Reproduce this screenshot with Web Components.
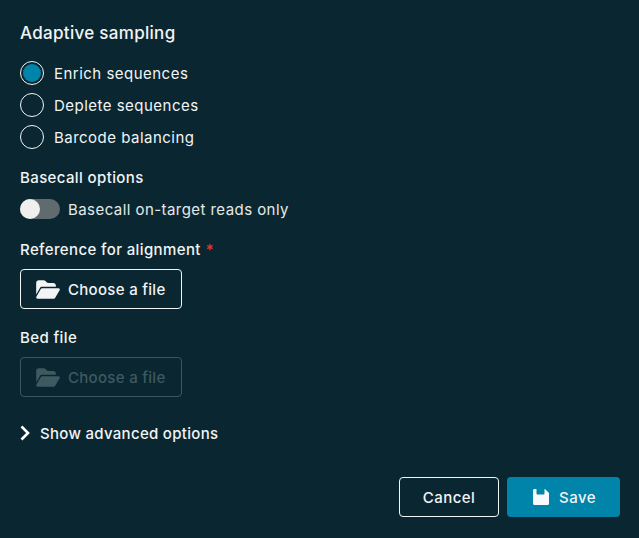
<!DOCTYPE html>
<html>
<head>
<meta charset="utf-8">
<style>
    html, body { margin: 0; height: 100%; }
    body {
        background: #0a2731;
        color: #f2f4f5;
        font-family: Inter, "Liberation Sans", sans-serif;
        font-size: 15px;
    }
</style>
</head>
<body>
<sampling-form>
    <form-heading>Adaptive sampling</form-heading>
    <radio-group>
        <radio-option checked>Enrich sequences</radio-option>
        <radio-option>Deplete sequences</radio-option>
        <radio-option>Barcode balancing</radio-option>
    </radio-group>
    <form-field label="Basecall options">
        <toggle-switch>Basecall on-target reads only</toggle-switch>
    </form-field>
    <form-field label="Reference for alignment" required>
        <file-button>Choose a file</file-button>
    </form-field>
    <form-field label="Bed file">
        <file-button disabled>Choose a file</file-button>
    </form-field>
    <advanced-toggle>Show advanced options</advanced-toggle>
    <form-actions></form-actions>
</sampling-form>

<script>
    const FOLDER_PATH = "M88.7 223.8L0 375.8V96C0 60.7 28.7 32 64 32H181.5c17 0 33.3 6.7 45.3 18.7l26.5 26.5c12 12 28.3 18.7 45.3 18.7H416c35.3 0 64 28.7 64 64v32H144c-22.8 0-43.8 12.1-55.3 31.8zm27.6 16.1C122.1 230 132.6 224 144 224H544c11.5 0 22 6.2 27.7 16.1s5.6 22.2-.1 32.1l-112 192C453.9 474 443.4 480 432 480H32c-11.5 0-22-6.2-27.7-16.1s-5.6-22.2 .1-32.1l112-192z";

    class SamplingForm extends HTMLElement {
        constructor() {
            super();
            this.attachShadow({ mode: "open" });
            this.shadowRoot.innerHTML = `
                <style>
                    :host {
                        display: flex;
                        flex-direction: column;
                        box-sizing: border-box;
                        height: 538px;
                        padding: 21px 19px 21px 20px;
                    }
                </style>
                <slot></slot>
            `;
        }
    }

    class FormHeading extends HTMLElement {
        constructor() {
            super();
            this.attachShadow({ mode: "open" });
            this.shadowRoot.innerHTML = `
                <style>
                    :host {
                        display: block;
                        height: 24px;
                        line-height: 24px;
                        font-size: 17px;
                        font-weight: 500;
                        letter-spacing: 0.3px;
                        margin-bottom: 16px;
                    }
                </style>
                <slot></slot>
            `;
        }
    }

    class RadioGroup extends HTMLElement {
        constructor() {
            super();
            this.attachShadow({ mode: "open" });
            this.shadowRoot.innerHTML = `
                <style>
                    :host { display: flex; flex-direction: column; gap: 8px; margin-bottom: 18px; }
                </style>
                <slot></slot>
            `;
        }
    }

    class RadioOption extends HTMLElement {
        constructor() {
            super();
            this.attachShadow({ mode: "open" });
        }

        connectedCallback() {
            const checked = this.hasAttribute("checked");
            this.shadowRoot.innerHTML = `
                <style>
                    :host { display: flex; align-items: center; gap: 10px; height: 24px; letter-spacing: 0.48px; }
                    .dot {
                        box-sizing: border-box;
                        width: 24px;
                        height: 24px;
                        border: 1.5px solid #f2f4f5;
                        border-radius: 50%;
                        padding: 2px;
                        background-clip: content-box;
                        background-color: ${checked ? "#0084a9" : "transparent"};
                    }
                </style>
                <span class="dot"></span>
                <slot></slot>
            `;
        }
    }

    class FormField extends HTMLElement {
        constructor() {
            super();
            this.attachShadow({ mode: "open" });
        }

        connectedCallback() {
            const star = this.hasAttribute("required") ? `<span class="star">*</span>` : "";
            this.shadowRoot.innerHTML = `
                <style>
                    :host { display: block; margin-bottom: 18px; }
                    .label {
                        height: 20px;
                        line-height: 22px;
                        margin-bottom: 10px;
                        font-size: 15px;
                        font-weight: 500;
                        letter-spacing: 0.38px;
                    }
                    .star { color: #e5362c; margin-left: 5px; }
                </style>
                <div class="label">${this.getAttribute("label")}${star}</div>
                <slot></slot>
            `;
        }
    }

    class ToggleSwitch extends HTMLElement {
        constructor() {
            super();
            this.attachShadow({ mode: "open" });
            this.shadowRoot.innerHTML = `
                <style>
                    :host { display: flex; align-items: center; gap: 8px; height: 20px; padding: 2px 0; letter-spacing: 0.44px; color: #e6e9ea; }
                    .track { display: block; width: 40px; height: 20px; border-radius: 10px; background: #5f6b6e; }
                    .knob { display: block; width: 20px; height: 20px; border-radius: 50%; background: #f0efee; }
                </style>
                <span class="track"><span class="knob"></span></span>
                <slot></slot>
            `;
        }
    }

    class FileButton extends HTMLElement {
        constructor() {
            super();
            this.attachShadow({ mode: "open" });
        }

        connectedCallback() {
            const off = this.hasAttribute("disabled");
            this.shadowRoot.innerHTML = `
                <style>
                    :host {
                        display: flex;
                        align-items: center;
                        gap: 8px;
                        box-sizing: border-box;
                        width: 162px;
                        height: 40px;
                        padding-left: 15px;
                        border: 1px solid ${off ? "#3d565e" : "#f2f4f5"};
                        border-radius: 4px;
                        font-weight: 500;
                        letter-spacing: 0.3px;
                        color: ${off ? "#3f5960" : "#f2f4f5"};
                    }
                    svg { width: 24px; height: 21px; fill: currentColor; }
                </style>
                <svg viewBox="0 0 576 512"><path d="${FOLDER_PATH}"/></svg>
                <slot></slot>
            `;
        }
    }

    class AdvancedToggle extends HTMLElement {
        constructor() {
            super();
            this.attachShadow({ mode: "open" });
            this.shadowRoot.innerHTML = `
                <style>
                    :host { display: flex; align-items: center; gap: 10px; height: 20px; margin-top: 8px; font-weight: 500; letter-spacing: 0.3px; }
                    svg { width: 10px; height: 16px; fill: none; stroke: #fff; stroke-width: 2.6; }
                </style>
                <svg viewBox="0 0 10 16"><path d="M1.5 1.5L8 8L1.5 14.5"/></svg>
                <slot></slot>
            `;
        }
    }

    class FormActions extends HTMLElement {
        constructor() {
            super();
            this.attachShadow({ mode: "open" });
            this.shadowRoot.innerHTML = `
                <style>
                    :host { display: flex; justify-content: flex-end; gap: 8px; margin-top: auto; }
                    button {
                        display: flex;
                        align-items: center;
                        justify-content: center;
                        gap: 10px;
                        box-sizing: border-box;
                        height: 40px;
                        border-radius: 4px;
                        padding: 0;
                        font: 500 15px Inter, "Liberation Sans", sans-serif;
                        letter-spacing: 0.45px;
                        color: #f2f4f5;
                    }
                    .cancel { width: 100px; background: transparent; border: 1px solid #f2f4f5; }
                    .save { width: 113px; padding-left: 2px; background: #0084a9; border: 0; }
                    svg { width: 16px; height: 16px; fill: #f8f9fb; }
                </style>
                <button class="cancel">Cancel</button>
                <button class="save">
                    <svg viewBox="0 0 16 16"><path d="M1.5 0H3.5V4.5C3.5 5 3.9 5.5 4.5 5.5H10.5C11 5.5 11.5 5 11.5 4.5V0H12L16 4V14.5C16 15.3 15.3 16 14.5 16H1.5C.7 16 0 15.3 0 14.5V1.5C0 .7 .7 0 1.5 0Z"/></svg>
                    Save
                </button>
            `;
        }
    }

    customElements.define("sampling-form", SamplingForm);
    customElements.define("form-heading", FormHeading);
    customElements.define("radio-group", RadioGroup);
    customElements.define("radio-option", RadioOption);
    customElements.define("form-field", FormField);
    customElements.define("toggle-switch", ToggleSwitch);
    customElements.define("file-button", FileButton);
    customElements.define("advanced-toggle", AdvancedToggle);
    customElements.define("form-actions", FormActions);
</script>
</body>
</html>
